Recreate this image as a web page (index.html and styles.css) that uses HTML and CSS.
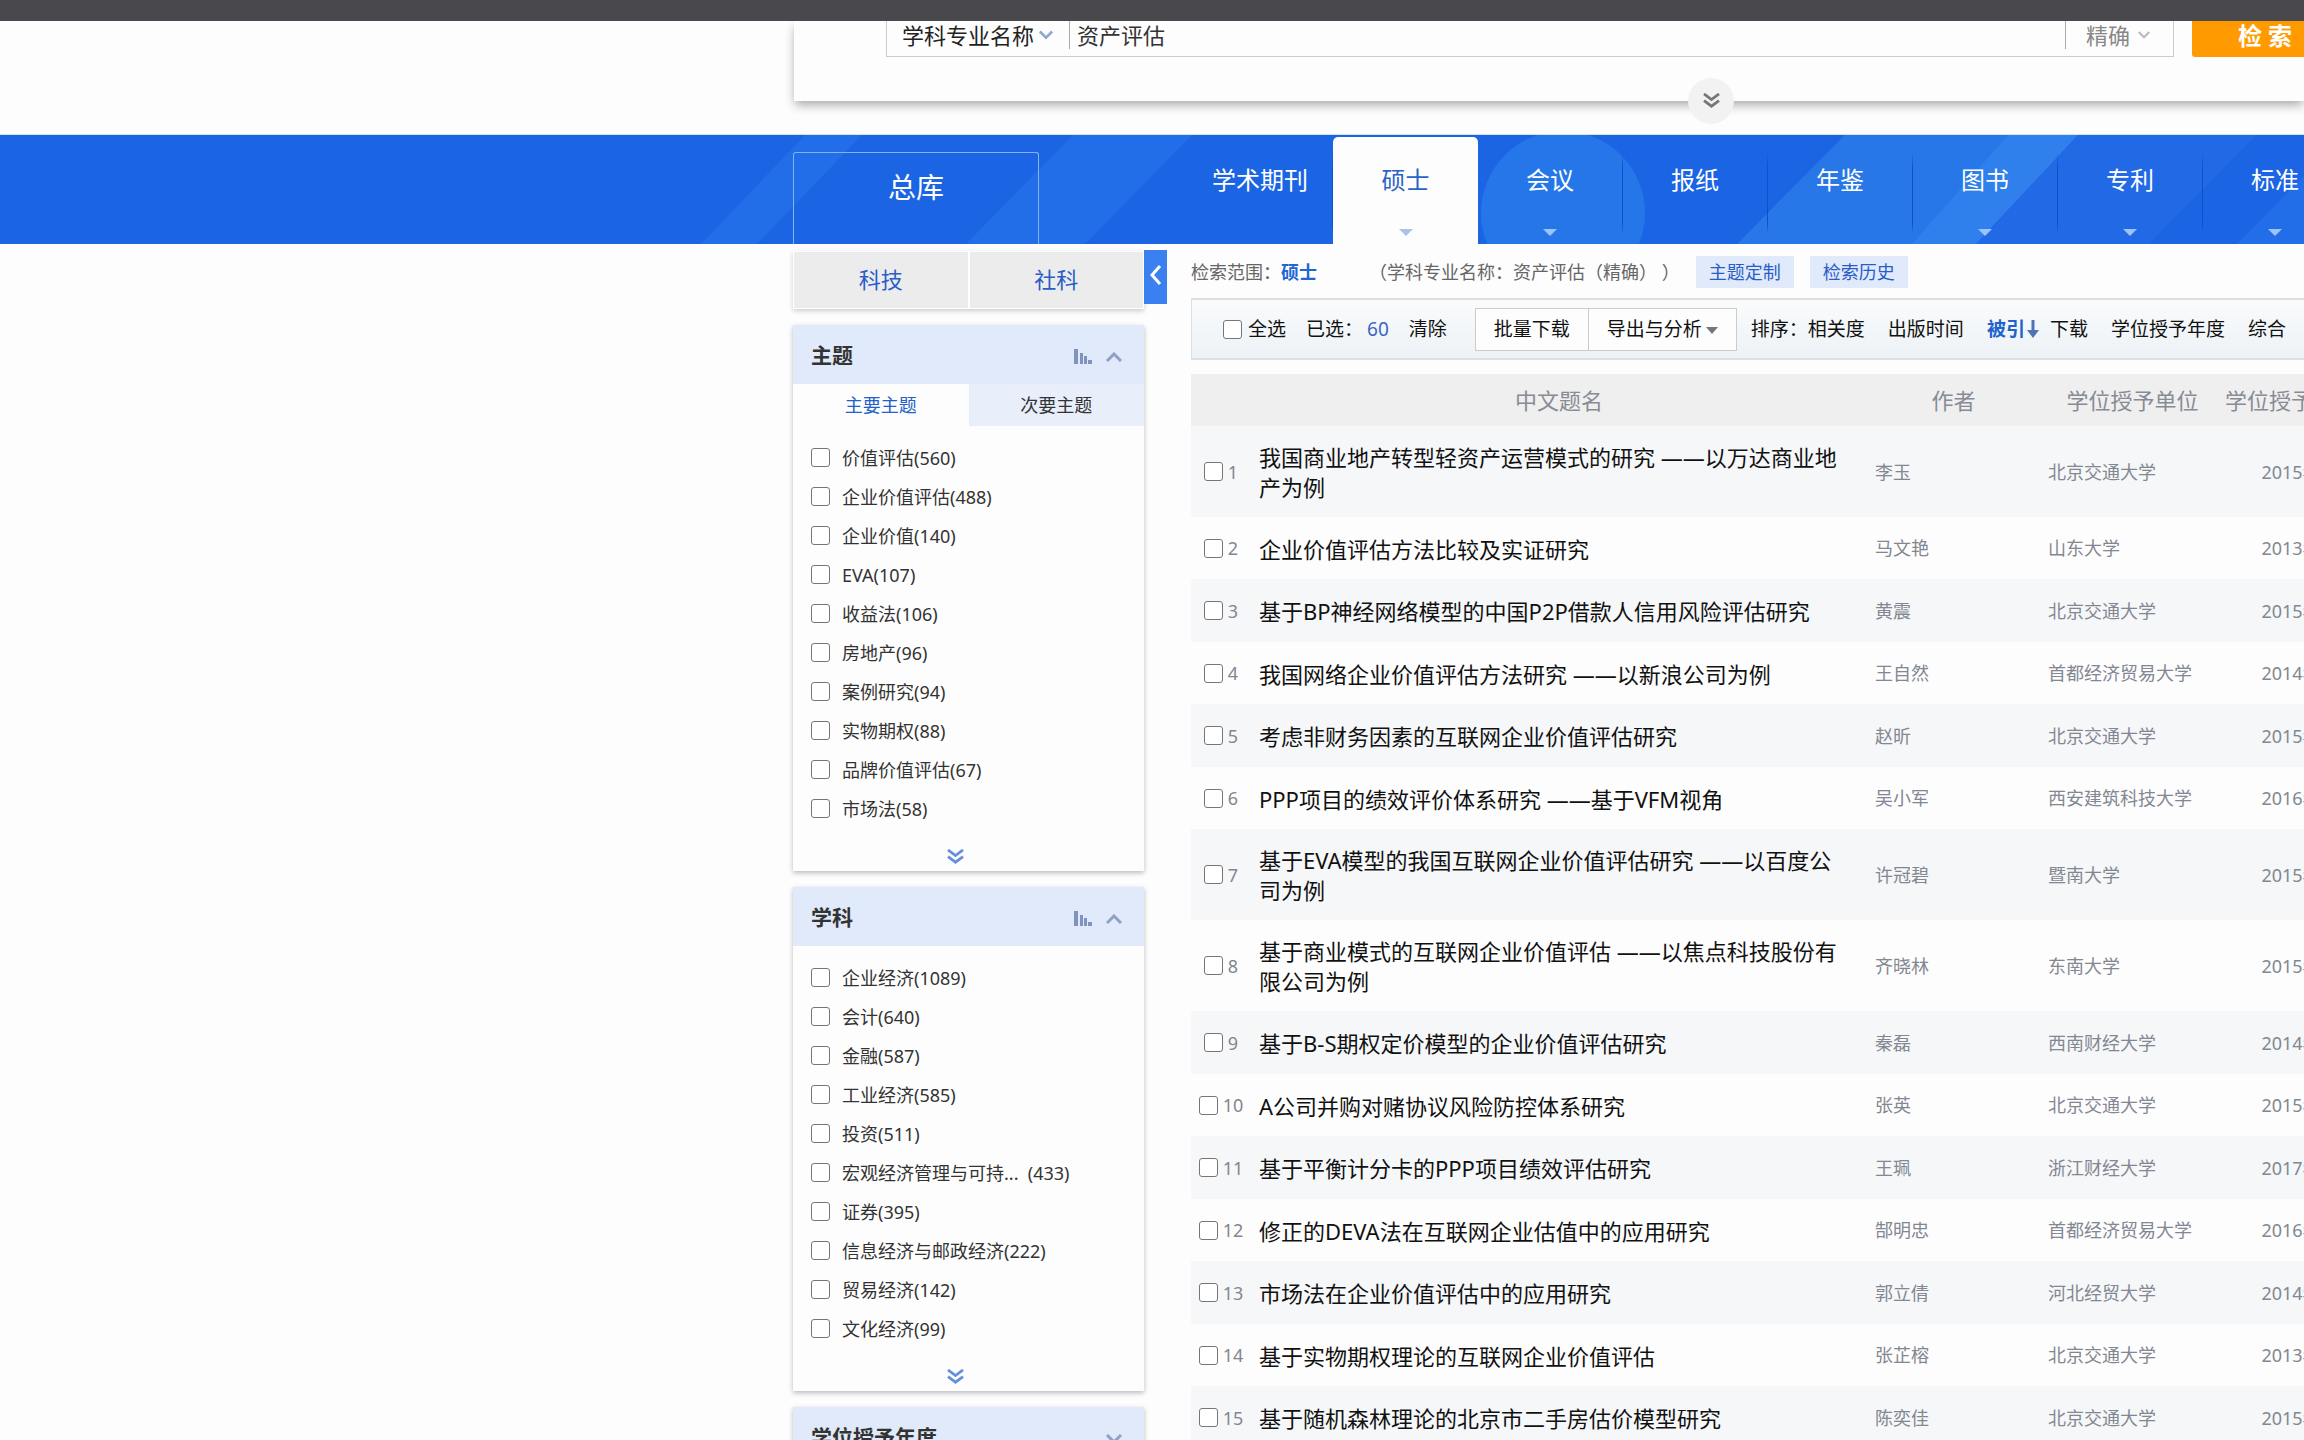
FILE: index.html
```html
<!DOCTYPE html>
<html lang="zh-CN">
<head>
<meta charset="utf-8">
<title>检索结果</title>
<link rel="stylesheet" href="styles.css">
</head>
<body>
<svg class="sprite" aria-hidden="true">
  <symbol id="double-down" viewBox="0 0 18 16"><path d="M1 1l8 6 8-6M1 8l8 6 8-6" fill="none" stroke="currentColor" stroke-width="3"/></symbol>
  <symbol id="chev-down" viewBox="0 0 16 10"><path d="M1 1l7 7 7-7" fill="none" stroke="currentColor" stroke-width="3"/></symbol>
  <symbol id="chev-up" viewBox="0 0 16 10"><path d="M1 9l7-7 7 7" fill="none" stroke="currentColor" stroke-width="3"/></symbol>
  <symbol id="bars" viewBox="0 0 18 15"><path d="M0 0h4v15H0zM6 4h3v11H6zM10 7h3v8h-3zM14 11h4v4h-4z" fill="currentColor"/></symbol>
</svg>

<div class="topbar"></div>

<form class="search">
  <div class="search-box">
    <button type="button" class="field">学科专业名称<svg class="field-chev"><use href="#chev-down"/></svg></button>
    <input class="query" type="text" aria-label="检索词" value="资产评估">
    <button type="button" class="match">精确<svg class="match-chev"><use href="#chev-down"/></svg></button>
  </div>
  <button type="submit" class="go">检 索</button>
  <button type="button" class="expand" aria-label="展开"><svg><use href="#double-down"/></svg></button>
</form>

<nav class="nav">
  <svg class="nav-art" aria-hidden="true">
    <g fill="#226de8">
      <path d="M805 0h57L757 109h-56z"/>
      <path d="M1073 0h119L1085 109H966z"/>
      <circle cx="1563" cy="78" r="82" fill="#2476e9"/>
      <path d="M1845 0h233L1976 109H1737z" fill="#2877e8"/>
      <path d="M2008 0h70L1976 109h-64z" fill="#2f7fec"/>
      <path d="M2078 0h178L2149 109H1976z" fill="#2269e5"/>
      <path d="M2344 0h60v109H2237z"/>
    </g>
  </svg>
  <a class="all" href="#">总库</a>
  <ul class="tabs">
    <li><a href="#">学术期刊</a></li>
    <li class="on"><a class="more" href="#">硕士</a></li>
    <li><a class="more" href="#">会议</a></li>
    <li><a href="#">报纸</a></li>
    <li><a href="#">年鉴</a></li>
    <li><a class="more" href="#">图书</a></li>
    <li><a class="more" href="#">专利</a></li>
    <li><a class="more" href="#">标准</a></li>
  </ul>
</nav>

<div class="page">
  <aside class="side">
    <div class="kinds"><a href="#">科技</a><a href="#">社科</a></div>
    <section class="card">
      <h2>主题<svg class="bars"><use href="#bars"/></svg><svg class="chev"><use href="#chev-up"/></svg></h2>
      <div class="subtabs"><button type="button" class="on">主要主题</button><button type="button">次要主题</button></div>
      <div class="items">
        <label><input type="checkbox">价值评估(560)</label>
        <label><input type="checkbox">企业价值评估(488)</label>
        <label><input type="checkbox">企业价值(140)</label>
        <label><input type="checkbox">EVA(107)</label>
        <label><input type="checkbox">收益法(106)</label>
        <label><input type="checkbox">房地产(96)</label>
        <label><input type="checkbox">案例研究(94)</label>
        <label><input type="checkbox">实物期权(88)</label>
        <label><input type="checkbox">品牌价值评估(67)</label>
        <label><input type="checkbox">市场法(58)</label>
      </div>
      <button type="button" class="unfold" aria-label="更多"><svg><use href="#double-down"/></svg></button>
    </section>
    <section class="card">
      <h2>学科<svg class="bars"><use href="#bars"/></svg><svg class="chev"><use href="#chev-up"/></svg></h2>
      <div class="items">
        <label><input type="checkbox">企业经济(1089)</label>
        <label><input type="checkbox">会计(640)</label>
        <label><input type="checkbox">金融(587)</label>
        <label><input type="checkbox">工业经济(585)</label>
        <label><input type="checkbox">投资(511)</label>
        <label><input type="checkbox">宏观经济管理与可持...&nbsp; (433)</label>
        <label><input type="checkbox">证券(395)</label>
        <label><input type="checkbox">信息经济与邮政经济(222)</label>
        <label><input type="checkbox">贸易经济(142)</label>
        <label><input type="checkbox">文化经济(99)</label>
      </div>
      <button type="button" class="unfold" aria-label="更多"><svg><use href="#double-down"/></svg></button>
    </section>
    <section class="card">
      <h2>学位授予年度<svg class="chev"><use href="#chev-down"/></svg></h2>
    </section>
  </aside>
  <button type="button" class="collapse" aria-label="收起"><svg viewBox="0 0 12 20"><path d="M10 1L2 10l8 9" fill="none" stroke="#fff" stroke-width="3"/></svg></button>

  <main class="results">
    <div class="scope">
      <span>检索范围：</span><a class="cur" href="#">硕士</a>
      <span class="cond">（学科专业名称：资产评估（精确） ）</span>
      <button type="button">主题定制</button><button type="button">检索历史</button>
    </div>
    <div class="tools">
      <label class="pick"><input type="checkbox">全选</label>
      <span class="chosen">已选：</span><a class="count" href="#">60</a><a class="clear" href="#">清除</a>
      <div class="group"><button type="button">批量下载</button><button type="button">导出与分析<i class="caret"></i></button></div>
      <span>排序：</span>
      <div class="sorts">
        <a href="#">相关度</a><a href="#">出版时间</a><a class="by" href="#">被引<svg viewBox="0 0 12 18"><path d="M6 0v13" stroke="currentColor" stroke-width="3"/><path d="M0 10h12l-6 8z" fill="currentColor"/></svg></a><a href="#">下载</a><a href="#">学位授予年度</a><a href="#">综合</a>
      </div>
    </div>
    <table>
      <colgroup><col class="c-num"><col class="c-title"><col class="c-author"><col class="c-unit"><col class="c-year"></colgroup>
      <thead><tr><th></th><th>中文题名</th><th>作者</th><th>学位授予单位</th><th>学位授予年度</th></tr></thead>
      <tbody>
        <tr><td><label><input type="checkbox">1</label></td><td><a href="#">我国商业地产转型轻资产运营模式的研究 ——以万达商业地产为例</a></td><td>李玉</td><td>北京交通大学</td><td>2015年</td></tr>
        <tr><td><label><input type="checkbox">2</label></td><td><a href="#">企业价值评估方法比较及实证研究</a></td><td>马文艳</td><td>山东大学</td><td>2013年</td></tr>
        <tr><td><label><input type="checkbox">3</label></td><td><a href="#">基于BP神经网络模型的中国P2P借款人信用风险评估研究</a></td><td>黄震</td><td>北京交通大学</td><td>2015年</td></tr>
        <tr><td><label><input type="checkbox">4</label></td><td><a href="#">我国网络企业价值评估方法研究 ——以新浪公司为例</a></td><td>王自然</td><td>首都经济贸易大学</td><td>2014年</td></tr>
        <tr><td><label><input type="checkbox">5</label></td><td><a href="#">考虑非财务因素的互联网企业价值评估研究</a></td><td>赵昕</td><td>北京交通大学</td><td>2015年</td></tr>
        <tr><td><label><input type="checkbox">6</label></td><td><a href="#">PPP项目的绩效评价体系研究 ——基于VFM视角</a></td><td>吴小军</td><td>西安建筑科技大学</td><td>2016年</td></tr>
        <tr><td><label><input type="checkbox">7</label></td><td><a href="#">基于EVA模型的我国互联网企业价值评估研究 ——以百度公司为例</a></td><td>许冠碧</td><td>暨南大学</td><td>2015年</td></tr>
        <tr><td><label><input type="checkbox">8</label></td><td><a href="#">基于商业模式的互联网企业价值评估 ——以焦点科技股份有限公司为例</a></td><td>齐晓林</td><td>东南大学</td><td>2015年</td></tr>
        <tr><td><label><input type="checkbox">9</label></td><td><a href="#">基于B-S期权定价模型的企业价值评估研究</a></td><td>秦磊</td><td>西南财经大学</td><td>2014年</td></tr>
        <tr><td><label><input type="checkbox">10</label></td><td><a href="#">A公司并购对赌协议风险防控体系研究</a></td><td>张英</td><td>北京交通大学</td><td>2015年</td></tr>
        <tr><td><label><input type="checkbox">11</label></td><td><a href="#">基于平衡计分卡的PPP项目绩效评估研究</a></td><td>王珮</td><td>浙江财经大学</td><td>2017年</td></tr>
        <tr><td><label><input type="checkbox">12</label></td><td><a href="#">修正的DEVA法在互联网企业估值中的应用研究</a></td><td>郜明忠</td><td>首都经济贸易大学</td><td>2016年</td></tr>
        <tr><td><label><input type="checkbox">13</label></td><td><a href="#">市场法在企业价值评估中的应用研究</a></td><td>郭立倩</td><td>河北经贸大学</td><td>2014年</td></tr>
        <tr><td><label><input type="checkbox">14</label></td><td><a href="#">基于实物期权理论的互联网企业价值评估</a></td><td>张芷榕</td><td>北京交通大学</td><td>2013年</td></tr>
        <tr><td><label><input type="checkbox">15</label></td><td><a href="#">基于随机森林理论的北京市二手房估价模型研究</a></td><td>陈奕佳</td><td>北京交通大学</td><td>2015年</td></tr>
      </tbody>
    </table>
  </main>
</div>
</body>
</html>
```
FILE: styles.css
```css
* { box-sizing: border-box; }
html { overflow: hidden; }
body {
  --left: 793px;
  margin: 0;
  height: 100vh;
  overflow: hidden;
  background: #fdfdfd;
  color: #333;
  font: 18px/24px "Noto Sans", "Noto Sans CJK SC", sans-serif;
  text-spacing-trim: space-all;
}
a { color: inherit; text-decoration: none; }
button, input { font: inherit; color: inherit; }
button { border: 0; background: none; padding: 0; }
input[type="checkbox"] {
  appearance: none;
  flex: none;
  width: 19px;
  height: 19px;
  margin: 0;
  border: 1px solid #767676;
  border-radius: 3px;
  background: #fff;
}
.sprite { display: none; }

.topbar { height: 21px; background: #48484d; }

/* search panel */
.search {
  position: relative;
  display: flex;
  height: 80px;
  margin-left: 794px;
  padding-left: 92px;
  gap: 18px;
  background: #fdfdfd;
  box-shadow: 0 5px 10px -1px #0005;
  clip-path: inset(0 0 -30px -20px);
}
.search-box {
  display: flex;
  align-items: flex-start;
  width: 1288px;
  height: 36px;
  flex: none;
  border: solid #ccc;
  border-width: 0 1px 1px;
  font-size: 22px;
  line-height: 30px;
}
.field { display: flex; align-items: center; gap: 5px; width: 183px; height: 28px; padding-left: 15px; border-right: 1px solid #aaa; color: #222; }
.field-chev { width: 14px; height: 10px; color: #8fa8cc; }
.query { flex: 1; min-width: 0; height: 28px; border: 0; padding: 0 7px; background: none; outline: 0; }
.match { display: flex; align-items: center; gap: 8px; width: 108px; height: 28px; padding-left: 20px; border-left: 1px solid #aaa; color: #888; }
.match-chev { width: 12px; height: 10px; color: #bbb; }
.go { flex: none; width: 146px; height: 36px; padding: 0 0 6px; border-radius: 0 0 3px 3px; background: #ff9b00; color: #fff; font-size: 24px; font-weight: 700; }
.expand {
  position: absolute;
  left: 894px;
  bottom: -23px;
  width: 46px;
  height: 46px;
  border-radius: 50%;
  background: #f2f2f2;
  color: #777;
}
.expand svg { width: 17px; height: 15px; }

/* blue database bar */
.nav {
  position: relative;
  display: flex;
  align-items: flex-end;
  height: 109px;
  margin-top: 34px;
  padding-left: 793px;
  overflow: hidden;
  background: #1b65e4;
  box-shadow: 0 -1px #cfe6f0;
  color: #fff;
}
.nav-art { position: absolute; inset: 0; width: 100%; height: 100%; }
.all {
  position: relative;
  flex: none;
  width: 246px;
  height: 92px;
  margin-right: 149px;
  padding-top: 19px;
  border: 1px solid #83b3f5;
  border-bottom: 0;
  border-radius: 3px 3px 0 0;
  font-size: 28px;
  line-height: 30px;
  text-align: center;
}
.tabs { position: relative; display: flex; margin: 0; padding: 0; list-style: none; }
.tabs li { flex: none; width: 145px; height: 107px; border-right: 1px solid; border-image: linear-gradient(transparent 15%, #0b50cf 30% 80%, transparent 90%) 1; }
.tabs a { display: flex; flex-direction: column; align-items: center; height: 107px; padding-top: 28px; font-size: 24px; line-height: 30px; }
.more::after { content: ""; margin-top: 34px; border: solid transparent; border-width: 7px 7px 0; border-top-color: #9cc4fa; }
.tabs .on { border: 0; border-radius: 5px 5px 0 0; background: #fdfdfd; color: #2a62c8; }
.on .more::after { border-top-color: #a9c3e8; }

/* columns */
.page { display: flex; align-items: flex-start; padding-left: var(--left); }
.side { flex: none; display: flex; flex-direction: column; gap: 16px; width: 351px; padding-top: 7px; }
.kinds { display: flex; gap: 2px; height: 58px; padding: 1px; background: #fff; box-shadow: 0 2px 5px #0003; }
.kinds a { flex: 1; background: #ececec; color: #2a5cc8; font-size: 22px; line-height: 54px; text-align: center; }
.card { background: #fdfdfd; box-shadow: 0 2px 5px #0004; }
.card h2 { display: flex; align-items: center; height: 59px; margin: 0; padding: 0 22px 0 18px; background: #e0eafa; font-size: 21px; font-weight: 700; }
.bars { width: 18px; height: 15px; margin: 4px 14px 0 auto; color: #7f93bf; }
.chev { width: 16px; height: 10px; margin: 4px 0 0; color: #8fa1c4; }
h2 > .chev:only-child { margin-left: auto; }
.subtabs { display: flex; height: 42px; }
.subtabs button { flex: 1; background: #e8effb; }
.subtabs .on { background: none; color: #2161c8; }
.items { padding: 12px 18px 0; }
.items label { display: flex; align-items: center; gap: 12px; height: 39px; }
.unfold { display: flex; width: 324px; height: 43px; padding-top: 21px; justify-content: center; color: #6590dc; }
.unfold svg { width: 17px; height: 15px; }
.collapse { flex: none; width: 23px; height: 54px; margin-top: 6px; background: #3a80f0; }
.collapse svg { width: 12px; height: 20px; }

/* result list */
.results { flex: 1; min-width: 0; margin-left: 24px; overflow: hidden; white-space: nowrap; }
.scope { display: flex; align-items: center; height: 54px; padding-top: 2px; color: #666; }
.cur { color: #2166d6; font-weight: 700; }
.cond { margin-left: 52px; }
.scope button { height: 32px; margin-left: 16px; padding: 0 13px; background: #e0eafa; color: #2a5cc8; }
.tools { display: flex; align-items: center; height: 62px; margin-bottom: 14px; padding-left: 31px; border: solid #dde0e3; border-width: 2px 0 2px 1px; background: linear-gradient(#fafbfc, #edf2f6); color: #111; font-size: 19px; }
.pick { display: flex; align-items: center; gap: 6px; }
.chosen { margin-left: 20px; }
.count { margin-left: 4px; color: #3a66c0; }
.clear { margin-left: 20px; }
.group { display: flex; height: 43px; margin: 0 14px 0 28px; border: 1px solid #ccc; background: #fdfdfd; }
.group button { padding: 0 18px; }
.group button + button { border-left: 1px solid #ccc; }
.caret { display: inline-block; margin-left: 4px; border: solid transparent; border-width: 7px 6px 0; border-top-color: #777; vertical-align: 2px; }
.sorts { display: flex; gap: 23px; }
.by { color: #2161d0; font-weight: 700; margin-right: -12px; }
.by svg { width: 12px; height: 18px; margin-left: 2px; color: #5072b8; vertical-align: -2px; }

table { width: 100%; min-width: 1166px; table-layout: fixed; border-collapse: collapse; }
.c-num { width: 60px; }
.c-title { width: 616px; }
.c-author { width: 173px; }
.c-unit { width: 185px; }
th { height: 52px; padding: 0; background: #efefef; color: #878b94; font-size: 22px; font-weight: 400; line-height: 30px; text-align: center; }
tbody tr { height: 62px; }
tbody tr:nth-child(odd) { height: 63px; background: #f5f7f9; }
td { padding: 15px 8px; color: #828791; }
td:nth-child(1), td:nth-child(5) { padding: 0; text-align: center; }
td:nth-child(2) { padding: 16px 20px 15px 8px; white-space: normal; color: #111; font-size: 22px; line-height: 30px; }
td label { display: flex; align-items: center; justify-content: center; gap: 5px; }
```
